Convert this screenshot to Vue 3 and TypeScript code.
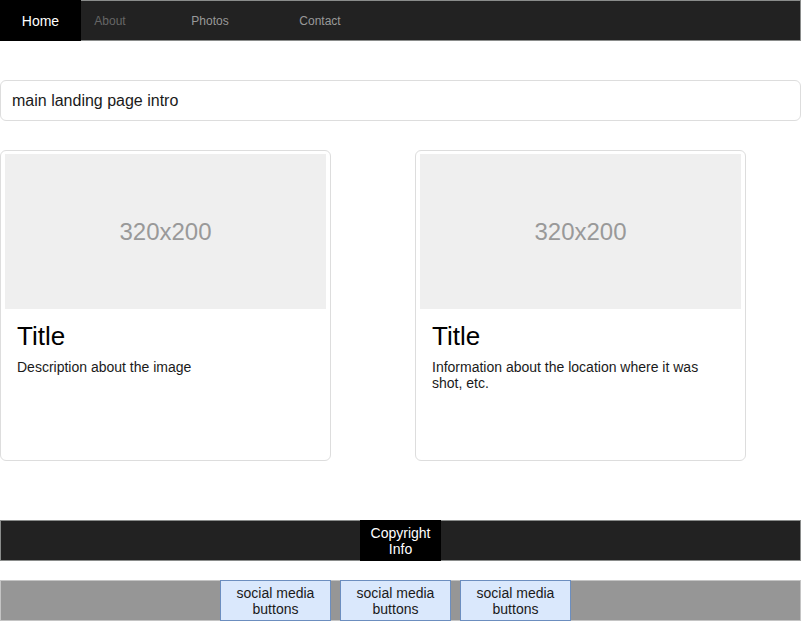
<script setup lang="ts">
interface NavItem {
  label: string
  href: string
  kind: string
}

interface Card {
  id: number
  placeholder: string
  title: string
  text: string
}

const navItems: NavItem[] = [
  { label: 'Home', href: '#home', kind: 'active' },
  { label: 'About', href: '#about', kind: 'muted' },
  { label: 'Photos', href: '#photos', kind: 'wide' },
  { label: 'Contact', href: '#contact', kind: 'regular' },
]

const cards: Card[] = [
  { id: 1, placeholder: '320x200', title: 'Title', text: 'Description about the image' },
  { id: 2, placeholder: '320x200', title: 'Title', text: 'Information about the location where it was shot, etc.' },
]

const socialButtons: number[] = [1, 2, 3]
</script>

<template>
  <div class="page">
    <nav class="bar navbar">
      <a v-for="item in navItems" :key="item.label" :href="item.href" :class="['nav-link', item.kind]">{{ item.label }}</a>
    </nav>

    <main>
      <p class="intro">main landing page intro</p>

      <section class="cards">
        <article v-for="card in cards" :key="card.id" class="card">
          <div class="thumb">{{ card.placeholder }}</div>
          <div class="card-body">
            <h2>{{ card.title }}</h2>
            <p>{{ card.text }}</p>
          </div>
        </article>
      </section>
    </main>

    <footer>
      <div class="bar copyright-bar">
        <p class="copyright">Copyright<br />Info</p>
      </div>
      <div class="social-bar">
        <button v-for="n in socialButtons" :key="n" type="button" class="social">social media buttons</button>
      </div>
    </footer>
  </div>
</template>

<style>
body {
  margin: 0;
  background: #ffffff;
}
</style>

<style scoped>
.page {
  font-family: "Liberation Sans", Arial, sans-serif;
  font-size: 14px;
  line-height: 16px;
  color: #1a1a1a;
}

.page * {
  box-sizing: border-box;
}

.bar {
  display: flex;
  min-height: 41px;
  background: #222222;
  box-shadow: inset 0 0 0 1px #8a8c8b;
}

.nav-link {
  display: flex;
  align-items: center;
  justify-content: center;
  font-size: 12px;
  color: #999999;
  text-decoration: none;
}

.nav-link.active {
  width: 81px;
  background: #000000;
  color: #ffffff;
  font-size: 14px;
}

.nav-link.muted {
  width: 58px;
  color: #666666;
}

.nav-link.wide {
  width: 142px;
}

.nav-link.regular {
  width: 78px;
}

.intro {
  margin: 39px 0 29px;
  padding: 10px 11px;
  border: 1px solid #dddddd;
  border-radius: 6px;
  font-size: 16px;
  line-height: 19px;
}

.cards {
  display: flex;
  flex-wrap: wrap;
  gap: 30px 84px;
}

.card {
  width: 331px;
  min-height: 311px;
  padding: 3px 4px;
  border: 1px solid #dddddd;
  border-radius: 6px;
}

.thumb {
  display: flex;
  align-items: center;
  justify-content: center;
  height: 155px;
  background: #efefef;
  color: #999999;
  font-size: 24px;
}

.card-body {
  padding: 12px;
}

.card-body h2 {
  margin: 0 0 8px;
  color: #000000;
  font-size: 26px;
  font-weight: 400;
  line-height: 30px;
}

.card-body p {
  margin: 0;
}

footer {
  display: grid;
  gap: 19px;
  margin-top: 59px;
}

.copyright-bar {
  justify-content: center;
}

.copyright {
  display: flex;
  flex-direction: column;
  align-items: center;
  justify-content: center;
  width: 81px;
  margin: 0;
  background: #000000;
  color: #ffffff;
  text-align: center;
}

.social-bar {
  display: flex;
  justify-content: center;
  gap: 9px;
  padding-right: 10px;
  background: #969696;
  box-shadow: inset 0 0 0 1px #c4c4c4;
}

.social {
  width: 111px;
  min-height: 41px;
  padding: 0 12px;
  border: 1px solid #6c8ebf;
  border-radius: 0;
  background: #dae8fc;
  color: #1a1a1a;
  font: inherit;
}
</style>
